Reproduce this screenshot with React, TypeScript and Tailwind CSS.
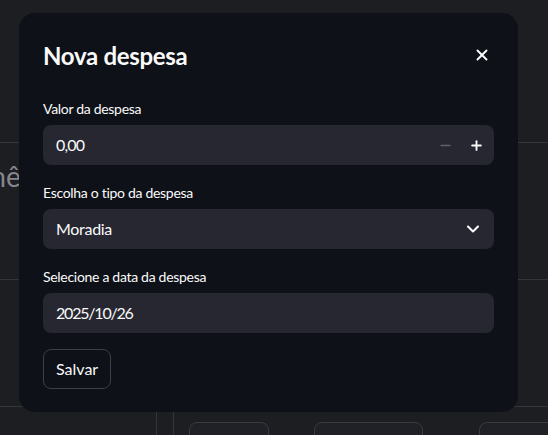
import { X, Minus, Plus, ChevronDown } from "lucide-react";

const font = { fontFamily: "Lato, 'Noto Sans', sans-serif" };

const Field = ({ label, children }: { label: string; children: React.ReactNode }) => (
  <div className="flex flex-col">
    <label className="h-[21px] text-[14px] leading-[21px] tracking-[-0.3px] text-[#fafafa] mb-[6px]">{label}</label>
    {children}
  </div>
);

const Background = () => (
  <div className="absolute inset-0 flex flex-col bg-[#1d1e22]">
    <div className="h-[143px] shrink-0 border-b border-[#34353b]" />
    <div className="h-[137px] shrink-0 border-b border-[#34353b] overflow-hidden pt-[16px]">
      <span className="block ml-[-17px] text-[28px] leading-[34px] text-[#85878c] whitespace-nowrap">mês</span>
    </div>
    <div className="h-[127px] shrink-0 border-b border-[#34353b]" />
    <div className="flex flex-1 overflow-hidden">
      <div className="w-[157px] shrink-0 border-r border-[#34353b]" />
      <div className="w-[17px] shrink-0 border-r border-[#34353b]" />
      <div className="flex shrink-0 pl-[15px] pt-[15px]">
        <div className="w-[80px] h-[40px] shrink-0 rounded-lg border border-[#3a3b41] bg-[#1f2126]" />
        <div className="ml-[45px] w-[109px] h-[40px] shrink-0 rounded-lg border border-[#3a3b41] bg-[#1f2126]" />
        <div className="ml-[56px] w-[109px] h-[40px] shrink-0 rounded-lg border border-[#3a3b41] bg-[#1f2126]" />
      </div>
    </div>
  </div>
);

export default function App() {
  return (
    <div className="relative w-[548px] h-[435px] overflow-hidden" style={font}>
      <Background />
      <div className="absolute left-[19px] top-[13px] w-[499px] h-[399px] rounded-2xl bg-[#0e1117] px-6 pt-[28px]">
        <div className="flex items-center justify-between h-[29px]">
          <h2 className="text-[24px] font-bold leading-[29px] tracking-[-0.3px] text-[#fafafa]">Nova despesa</h2>
          <X size={18} strokeWidth={2.6} className="text-[#fafafa] mr-[3px] mt-[-2px]" />
        </div>
        <div className="mt-[28px] flex flex-col gap-[17px]">
          <Field label="Valor da despesa">
            <div className="h-[40px] rounded-lg bg-[#262730] flex items-center pl-[13px] pr-[10px]">
              <span className="flex-1 text-[16px] tracking-[-0.8px] text-[#fafafa]">0,00</span>
              <Minus size={15} strokeWidth={2.5} className="text-[#5f616a] mr-[16px]" />
              <Plus size={15} strokeWidth={3} className="text-[#fafafa]" />
            </div>
          </Field>
          <Field label="Escolha o tipo da despesa">
            <div className="h-[40px] rounded-lg bg-[#262730] flex items-center pl-[13px] pr-[11px]">
              <span className="flex-1 text-[16px] tracking-[-0.3px] text-[#fafafa]">Moradia</span>
              <ChevronDown size={20} strokeWidth={2.5} className="text-[#fafafa]" />
            </div>
          </Field>
          <Field label="Selecione a data da despesa">
            <div className="h-[40px] rounded-lg bg-[#262730] flex items-center pl-[13px]">
              <span className="text-[16px] tracking-[-1.2px] text-[#fafafa]">2025/10/26</span>
            </div>
          </Field>
        </div>
        <button className="mt-[16px] h-[40px] px-[12px] rounded-lg border border-[#3d3f47] text-[16px] text-[#fafafa]">
          Salvar
        </button>
      </div>
    </div>
  );
}
